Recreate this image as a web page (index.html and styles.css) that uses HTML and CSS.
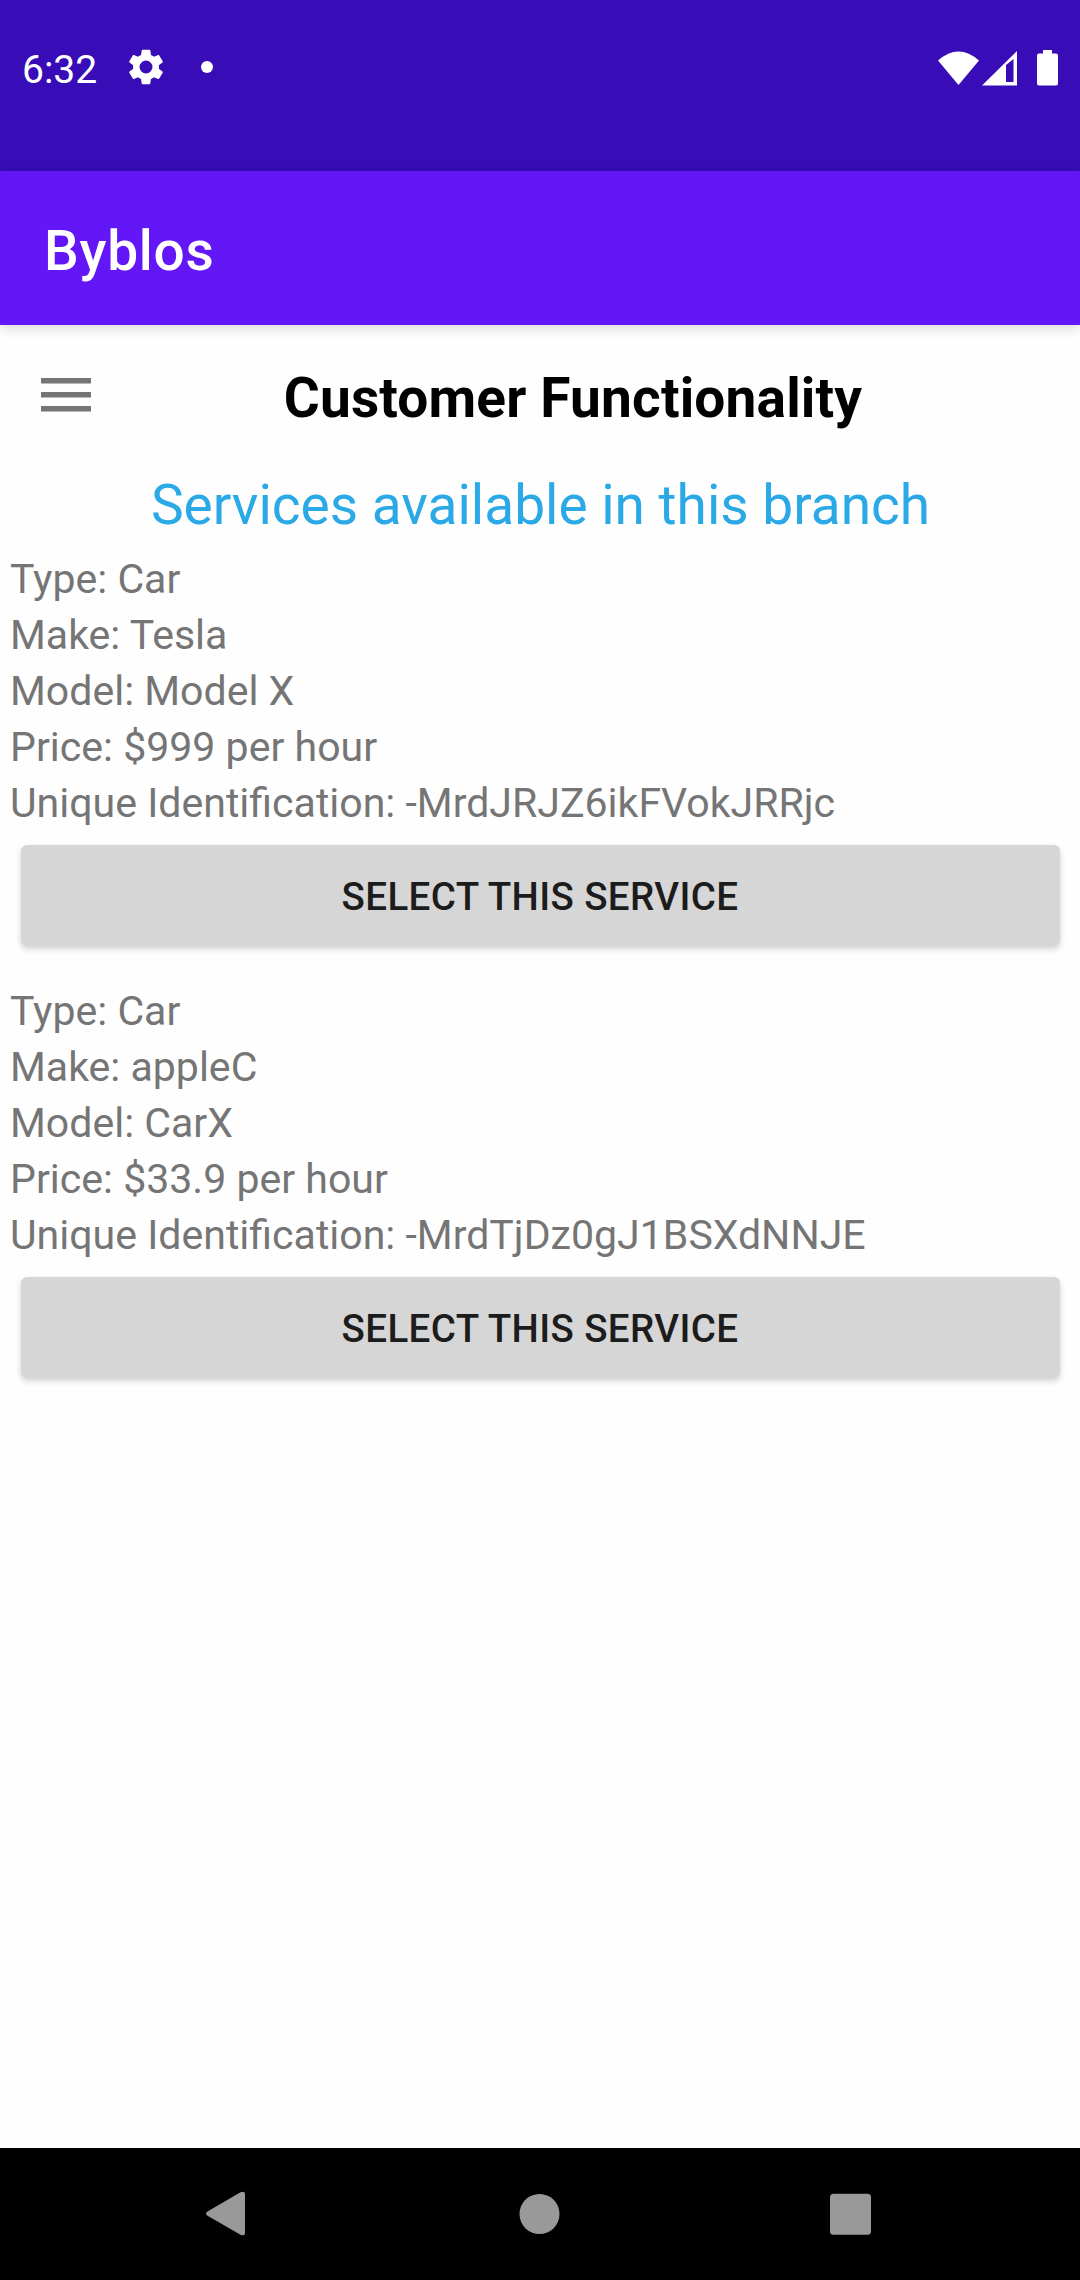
FILE: index.html
```html
<!DOCTYPE html>
<html lang="en">
<head>
<meta charset="utf-8">
<title>Byblos</title>
<link rel="stylesheet" href="styles.css">
</head>
<body>
<div class="screen">
  <div class="status-bar">
    <span class="clock">6:32</span>
    <svg class="gear" viewBox="2 2 20 20"><path fill="#fff" d="M19.14 12.94c.04-.3.06-.61.06-.94 0-.32-.02-.64-.07-.94l2.03-1.58c.18-.14.23-.41.12-.61l-1.92-3.32c-.12-.22-.37-.29-.59-.22l-2.39.96c-.5-.38-1.03-.7-1.62-.94L14.400 2.810c-.04-.24-.24-.41-.48-.41h-3.840c-.24 0-.43.17-.47.41L9.250 5.350c-.59.24-1.130.57-1.620.94l-2.390-.96c-.22-.08-.47 0-.59.22L2.740 8.870c-.12.21-.08.47.12.61l2.030 1.580c-.05.3-.09.63-.09.94s.02.64.07.94l-2.030 1.580c-.18.14-.23.41-.12.61l1.920 3.320c.12.22.37.29.59.22l2.390-.96c.5.38 1.030.7 1.620.94l.36 2.540c.05.24.24.41.48.41h3.840c.24 0 .44-.17.47-.41l.36-2.540c.59-.24 1.130-.56 1.620-.94l2.390.96c.22.08.47 0 .59-.22l1.920-3.320c.12-.22.07-.47-.12-.61l-2.010-1.580zM12 15.600a3.600 3.600 0 1 1 0-7.200 3.600 3.600 0 0 1 0 7.200z"/></svg>
    <span class="dot"></span>
    <svg class="signals" viewBox="0 0 122 38" fill="#fff">
      <path d="M0 12.500Q20.500-5.500 41 12.500L20.500 37Z"/>
      <path fill-rule="evenodd" d="M44 37.500L79 3V37.500ZM68 17V34H75.500V11Z"/>
      <path d="M105 2H114V5.500H118Q120 5.500 120 7.500V35.500Q120 37.500 118 37.500H101Q99 37.500 99 35.500V7.500Q99 5.500 101 5.500H105Z"/>
    </svg>
  </div>
  <header class="app-bar">Byblos</header>
  <main class="content">
    <div class="title-row">
      <svg class="menu" viewBox="0 0 50 34" fill="#757575"><path d="M0 0H50V5.600H0ZM0 14H50V19.600H0ZM0 28H50V33.600H0Z"/></svg>
      <h1 class="title">Customer Functionality</h1>
    </div>
    <h2 class="subtitle">Services available in this branch</h2>
    <section class="service">
      <p>Type: Car</p>
      <p>Make: Tesla</p>
      <p>Model: Model X</p>
      <p>Price: $999 per hour</p>
      <p>Unique Identification: -MrdJRJZ6ikFVokJRRjc</p>
      <button class="select">SELECT THIS SERVICE</button>
    </section>
    <section class="service">
      <p>Type: Car</p>
      <p>Make: appleC</p>
      <p>Model: CarX</p>
      <p>Price: $33.9 per hour</p>
      <p>Unique Identification: -MrdTjDz0gJ1BSXdNNJE</p>
      <button class="select">SELECT THIS SERVICE</button>
    </section>
  </main>
  <nav class="nav-bar">
    <svg class="nav-icon" viewBox="0 0 48 48"><path fill="#999" d="M4.500 21.500L37.500 2.300Q42 0.500 42 4V43Q42 46.500 37.500 44.700L4.500 25.800Q1.500 23.700 4.500 21.500Z"/></svg>
    <svg class="nav-icon" viewBox="0 0 48 48"><circle cx="24.500" cy="24" r="20" fill="#999"/></svg>
    <svg class="nav-icon" viewBox="0 0 48 48"><rect x="4" y="3.700" width="41" height="41" rx="3.500" fill="#999"/></svg>
  </nav>
</div>
</body>
</html>
```
FILE: styles.css
```css
* {
  box-sizing: border-box;
}

body {
  margin: 0;
  font-family: Roboto, sans-serif;
  background: #fefefe;
}

.screen {
  display: flex;
  flex-direction: column;
  width: 1080px;
  height: 2280px;
}

.status-bar {
  display: flex;
  align-items: center;
  height: 171px;
  padding: 0 20px 37px 22px;
  background: #380db7;
  color: #fff;
}

.clock {
  width: 106px;
  padding-top: 5px;
  font-size: 39px;
  line-height: 46px;
}

.gear {
  width: 36px;
  height: 36px;
}

.dot {
  width: 12px;
  height: 12px;
  margin-left: 37px;
  border-radius: 50%;
  background: #fff;
}

.signals {
  width: 122px;
  height: 38px;
  margin-left: auto;
}

.app-bar {
  position: relative;
  height: 154px;
  padding: 47px 44px 0;
  background: #6317f7;
  box-shadow: 0 3px 12px rgba(0, 0, 0, 0.15);
  color: #fff;
  font-size: 55px;
  font-weight: 500;
  letter-spacing: 0.75px;
  line-height: 66px;
}

.content {
  flex: 1;
}

.title-row {
  display: flex;
  align-items: flex-start;
  height: 147px;
  padding-left: 41px;
}

.menu {
  width: 50px;
  height: 34px;
  margin-top: 53px;
}

.title {
  width: 600px;
  margin: 41px 0 0 182px;
  color: #000;
  font-size: 55px;
  font-weight: 700;
  letter-spacing: 0.16px;
  line-height: 64px;
  text-align: center;
  white-space: nowrap;
}

.subtitle {
  height: 79px;
  margin: 0;
  padding-left: 1px;
  color: #2aa9e6;
  font-size: 55px;
  font-weight: 400;
  line-height: 66px;
  text-align: center;
}

.service {
  height: 432px;
  padding: 0 10px;
  color: #757575;
  font-size: 41.05px;
  line-height: 56px;
}

.service p {
  margin: 0;
}

.select {
  display: block;
  width: 1039px;
  height: 101px;
  margin: 14px 0 0 10.5px;
  padding: 1px 0 0;
  border: 0;
  border-radius: 6px;
  background: #d6d6d6;
  box-shadow: 0 3px 6px rgba(0, 0, 0, 0.18);
  color: #1c1c1c;
  font-family: inherit;
  font-size: 38.5px;
  font-weight: 500;
  letter-spacing: 0.38px;
}

.nav-bar {
  display: flex;
  align-items: center;
  justify-content: space-between;
  height: 132px;
  padding: 0 206px 0 203px;
  background: #000;
}

.nav-icon {
  width: 48px;
  height: 48px;
}
```
